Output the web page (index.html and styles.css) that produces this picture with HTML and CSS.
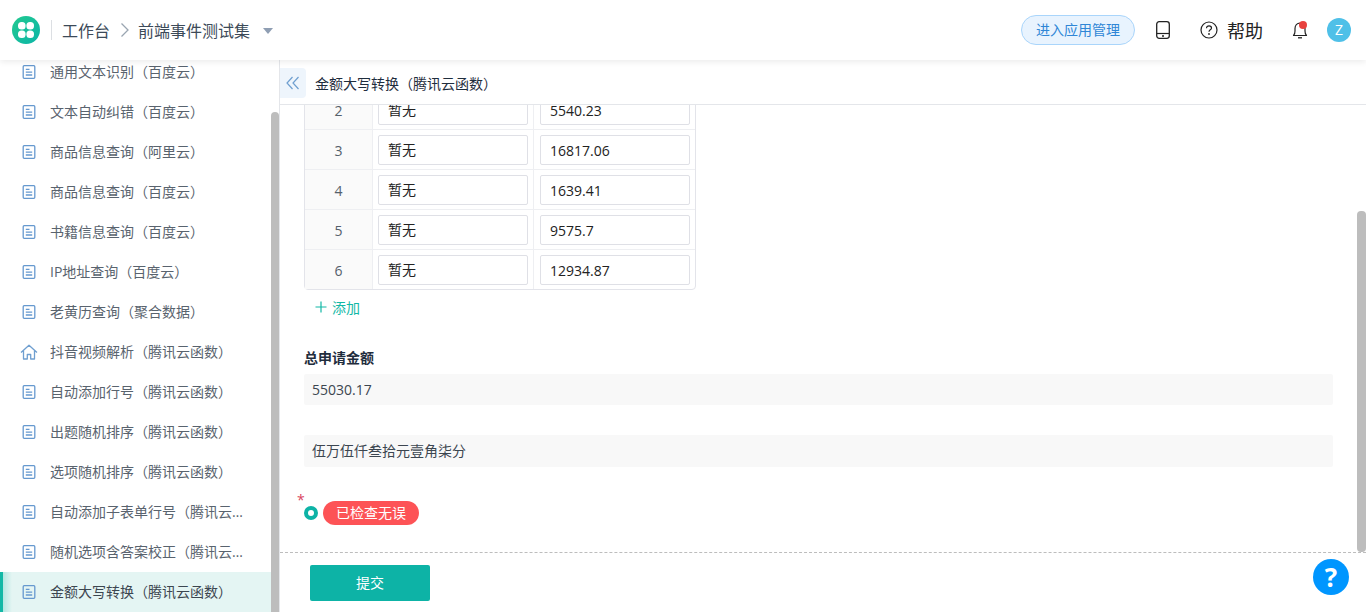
FILE: index.html
```html
<!Doctype html>
<html>
	<head>
		<meta charset="utf-8">
		<title>金额大写转换（腾讯云函数）</title>
		<link rel="stylesheet" href="styles.css">
	</head>
	<body>
		<div class="topbar">
			<div class="logo">
				<svg width="28" height="28" viewBox="0 0 28 28">
					<defs><linearGradient id="lg" x1="0" y1="0" x2="1" y2="1"><stop offset="0" stop-color="#22c98f"/><stop offset="1" stop-color="#0cb5a8"/></linearGradient></defs>
					<circle cx="14" cy="14" r="14" fill="url(#lg)"/>
					<rect x="6" y="6" width="7.600" height="7.600" rx="3.500" fill="#fff"/>
					<rect x="14.400" y="6" width="7.600" height="7.600" rx="3.500" fill="#fff"/>
					<rect x="6" y="14.400" width="7.600" height="7.600" rx="3.500" fill="#fff"/>
					<rect x="14.400" y="14.400" width="7.600" height="7.600" rx="3.500" fill="#fff"/>
				</svg>
			</div>
			<div class="crumb-line"></div>
			<span class="crumb">工作台</span>
			<svg class="crumb-arrow" width="10" height="16" viewBox="0 0 10 16"><path d="M1.500 1.500L8 8l-6.500 6.500" fill="none" stroke="#9aa5b1" stroke-width="1.300"/></svg>
			<span class="crumb">前端事件测试集</span>
			<div class="caret"></div>
			<div class="spacer"></div>
			<a class="manage">进入应用管理</a>
			<svg class="tablet" width="16" height="20" viewBox="0 0 16 20"><rect x="1.700" y="1.700" width="12.600" height="16.600" rx="2.500" fill="none" stroke="#222" stroke-width="1.300"/><path d="M2 13.500h12" stroke="#222" stroke-width="1.200"/><circle cx="8" cy="16" r="1" fill="#222"/></svg>
			<svg class="help-icon" width="18" height="18" viewBox="0 0 18 18"><circle cx="9" cy="9" r="8" fill="none" stroke="#222" stroke-width="1.200"/><path d="M6.500 7.200C6.500 5.700 7.600 4.800 9 4.800s2.500.9 2.500 2.200c0 1.800-2.500 1.900-2.500 3.700" fill="none" stroke="#222" stroke-width="1.200"/><circle cx="9" cy="13" r=".9" fill="#222"/></svg>
			<span class="help-text">帮助</span>
			<div class="bell">
				<svg width="16" height="20" viewBox="0 0 16 20"><path d="M1.500 15.500c1.200-1 1.500-2.200 1.500-4.500V8.500C3 5.500 5 3.200 8 3.200s5 2.300 5 5.300V11c0 2.300.3 3.500 1.500 4.500z" fill="none" stroke="#222" stroke-width="1.200" stroke-linejoin="round"/><path d="M6 17.800h4" stroke="#222" stroke-width="1.300"/></svg>
				<i class="bell-dot"></i>
			</div>
			<div class="avatar">Z</div>
		</div>

		<div class="page">
			<div class="sidebar">
				<div class="menu">
					<div class="item"><svg class="doc" viewBox="0 0 14 14"><use href="#doc"/></svg><span>通用文本识别（百度云）</span></div>
					<div class="item"><svg class="doc" viewBox="0 0 14 14"><use href="#doc"/></svg><span>文本自动纠错（百度云）</span></div>
					<div class="item"><svg class="doc" viewBox="0 0 14 14"><use href="#doc"/></svg><span>商品信息查询（阿里云）</span></div>
					<div class="item"><svg class="doc" viewBox="0 0 14 14"><use href="#doc"/></svg><span>商品信息查询（百度云）</span></div>
					<div class="item"><svg class="doc" viewBox="0 0 14 14"><use href="#doc"/></svg><span>书籍信息查询（百度云）</span></div>
					<div class="item"><svg class="doc" viewBox="0 0 14 14"><use href="#doc"/></svg><span>IP地址查询（百度云）</span></div>
					<div class="item"><svg class="doc" viewBox="0 0 14 14"><use href="#doc"/></svg><span>老黄历查询（聚合数据）</span></div>
					<div class="item"><svg class="home" viewBox="0 0 18 16"><path d="M1 8.500L9 1.200l8 7.300M3.500 6.800V15h3.800v-4.500h3.400V15h3.800V6.800" fill="none" stroke="#6f9fd0" stroke-width="1.300" stroke-linejoin="round"/></svg><span>抖音视频解析（腾讯云函数）</span></div>
					<div class="item"><svg class="doc" viewBox="0 0 14 14"><use href="#doc"/></svg><span>自动添加行号（腾讯云函数）</span></div>
					<div class="item"><svg class="doc" viewBox="0 0 14 14"><use href="#doc"/></svg><span>出题随机排序（腾讯云函数）</span></div>
					<div class="item"><svg class="doc" viewBox="0 0 14 14"><use href="#doc"/></svg><span>选项随机排序（腾讯云函数）</span></div>
					<div class="item"><svg class="doc" viewBox="0 0 14 14"><use href="#doc"/></svg><span>自动添加子表单行号（腾讯云函数）</span></div>
					<div class="item"><svg class="doc" viewBox="0 0 14 14"><use href="#doc"/></svg><span>随机选项含答案校正（腾讯云函数）</span></div>
					<div class="item active"><svg class="doc" viewBox="0 0 14 14"><use href="#doc"/></svg><span>金额大写转换（腾讯云函数）</span></div>
				</div>
				<div class="side-scroll"></div>
			</div>

			<div class="main">
				<div class="titlebar">
					<div class="collapse">
						<svg width="14" height="14" viewBox="0 0 14 14"><path d="M6.500 1L1 7l5.500 6M12.500 1L7 7l5.500 6" fill="none" stroke="#6f9fd0" stroke-width="1.200"/></svg>
					</div>
					<span class="title">金额大写转换（腾讯云函数）</span>
				</div>
				<div class="content">
					<div class="table">
						<div class="row"><div class="num">2</div><div class="cell"><div class="input">暂无</div></div><div class="cell"><div class="input amount">5540.23</div></div></div>
						<div class="row"><div class="num">3</div><div class="cell"><div class="input">暂无</div></div><div class="cell"><div class="input amount">16817.06</div></div></div>
						<div class="row"><div class="num">4</div><div class="cell"><div class="input">暂无</div></div><div class="cell"><div class="input amount">1639.41</div></div></div>
						<div class="row"><div class="num">5</div><div class="cell"><div class="input">暂无</div></div><div class="cell"><div class="input amount">9575.7</div></div></div>
						<div class="row"><div class="num">6</div><div class="cell"><div class="input">暂无</div></div><div class="cell"><div class="input amount">12934.87</div></div></div>
					</div>
					<div class="add">
						<svg width="12" height="12" viewBox="0 0 12 12"><path d="M6 .5v11M.5 6h11" stroke="#13b8a6" stroke-width="1.200"/></svg>
						<span>添加</span>
					</div>
					<div class="label">总申请金额</div>
					<div class="field">55030.17</div>
					<div class="field second">伍万伍仟叁拾元壹角柒分</div>
					<div class="check">
						<span class="star">*</span>
						<i class="radio"></i>
						<span class="pill">已检查无误</span>
					</div>
					<div class="main-scroll"></div>
				</div>
				<div class="footer">
					<a class="submit">提交</a>
				</div>
			</div>
		</div>

		<div class="float-help">?</div>

		<svg width="0" height="0" class="defs">
			<symbol id="doc" viewBox="0 0 14 14">
				<rect x="1.200" y=".7" width="11.600" height="12.600" rx="1" fill="none" stroke="#6699cf" stroke-width="1.300"/>
				<path d="M3.800 4.300h3.700M3.800 7.200h6.400M3.800 10h6.400" stroke="#6699cf" stroke-width="1.300"/>
			</symbol>
		</svg>
	</body>
</html>
```

FILE: styles.css
```css
* {box-sizing: border-box}
html, body { height:100%; margin:0; overflow:hidden; }
body {
	font-family:"Open Sans","Noto Sans CJK SC",sans-serif;
	font-size:14px;
	color:#1f2d3d;
	background:#fff;
}
.defs { position:absolute; }

/* top bar */
.topbar {
	position:relative;
	z-index:5;
	height:60px;
	display:flex;
	align-items:center;
	padding-left:19px;
	padding-right:15px;
	background:#fff;
	box-shadow:0 2px 6px rgba(0,0,0,.08);
}
.logo { width:28px; height:28px; margin-left:-7px; }
.logo svg { display:block; }
.crumb-line { width:1px; height:20px; background:#dcdfe3; margin-left:11px; margin-right:10px; }
.crumb { font-size:16px; color:#3c4a58; white-space:nowrap; }
.crumb-arrow { margin:0 8px 0 10px; }
.caret {
	width:0; height:0;
	margin-left:13px;
	margin-top:2px;
	border-left:5px solid transparent;
	border-right:5px solid transparent;
	border-top:6px solid #8f9eb3;
}
.spacer { flex:1; }
.manage {
	width:114px;
	height:30px;
	line-height:28px;
	text-align:center;
	font-size:14px;
	color:#2f86d6;
	background:#e8f3fe;
	border:1px solid #a9d5fb;
	border-radius:15px;
}
.tablet { margin-left:20px; }
.help-icon { margin-left:29px; }
.help-text { margin-left:9px; font-size:18px; color:#222; }
.bell { position:relative; width:16px; height:20px; margin-left:29px; margin-right:-1px; }
.bell svg { display:block; }
.bell-dot {
	position:absolute;
	top:1px; right:1px;
	width:8px; height:8px;
	border-radius:50%;
	background:#e8423f;
}
.avatar {
	width:24px; height:24px;
	margin-left:20px;
	border-radius:50%;
	background:#4fc0e8;
	color:#fff;
	font-size:14px;
	line-height:24px;
	text-align:center;
}

/* page */
.page { display:flex; height:552px; }
.sidebar {
	position:relative;
	width:280px;
	flex:none;
	overflow:hidden;
	border-right:1px solid #e4e6ea;
}
.menu { margin-top:-8px; }
.item {
	height:40px;
	display:flex;
	align-items:center;
	padding-left:22px;
	padding-right:24px;
	color:#59636e;
	font-size:14px;
}
.item span {
	margin-left:14px;
	padding-bottom:2px;
	white-space:nowrap;
	overflow:hidden;
	text-overflow:ellipsis;
}
.doc { width:14px; height:14px; flex:none; }
.home { width:18px; height:16px; flex:none; margin-left:-2px; margin-right:-2px; }
.item.active {
	background:linear-gradient(90deg,#b5e7e1,#e4f5f3 9px);
	color:#3c4650;
	border-left:3px solid #13b8a6;
	padding-left:19px;
}
.side-scroll {
	position:absolute;
	top:52px; bottom:0; right:0;
	width:8px;
	background:#bdbdbd;
	border-radius:4px 4px 0 0;
}

.main { flex:1; min-width:0; height:552px; display:flex; flex-direction:column; }
.titlebar {
	height:45px;
	flex:none;
	display:flex;
	align-items:center;
	border-bottom:1px solid #e4e6ea;
	padding-top:1px;
}
.collapse {
	width:26px; height:30px;
	margin-top:1px;
	display:flex;
	align-items:center;
	justify-content:center;
	background:#eef5fc;
	border-radius:0 4px 4px 0;
}
.title { margin-left:9px; font-size:14px; color:#1f2d3d; }

.content {
	position:relative;
	height:447px;
	flex:none;
	overflow:hidden;
	padding-left:24px;
	padding-right:33px;
}
.table {
	width:392px;
	margin-top:-16px;
	border:1px solid #e3e4ea;
	border-radius:0 0 4px 4px;
}
.row { display:flex; height:40px; border-bottom:1px solid #eeeff2; }
.row:last-child { height:39px; border-bottom:none; }
.num {
	width:68px;
	flex:none;
	display:flex;
	align-items:center;
	justify-content:center;
	padding-top:1px;
	background:#fafafa;
	border-right:1px solid #eeeff2;
	color:#55606b;
}
.cell {
	width:161px;
	flex:none;
	display:flex;
	align-items:center;
	padding-left:5px;
	border-right:1px solid #eeeff2;
}
.cell:last-child { border-right:none; padding-left:6px; }
.input {
	width:150px;
	height:30px;
	line-height:28px;
	padding-left:9px;
	border:1px solid #dfe0e6;
	border-radius:2px;
	color:#222;
}
.input.amount { line-height:30px; }
.add {
	display:flex;
	align-items:center;
	height:20px;
	margin-top:7px;
	padding-left:11px;
	color:#13b8a6;
}
.add svg { margin-right:5px; }
.label { margin-top:31px; font-size:14px; font-weight:bold; line-height:20px; color:#1f2d3d; }
.field {
	height:31px;
	margin-top:6px;
	line-height:31px;
	padding-left:8px;
	background:#f8f8f8;
	border-radius:2px;
	color:#3c4650;
}
.field.second { height:32px; margin-top:30px; line-height:31px; font-size:14px; }
.check { position:relative; display:flex; align-items:center; margin-top:34px; }
.star {
	position:absolute;
	left:-7px; top:-11px;
	color:#d9455f;
	font-size:14px;
	line-height:20px;
}
.radio {
	width:14px; height:14px;
	border-radius:50%;
	border:4px solid #0db3a6;
	background:#fff;
}
.pill {
	margin-left:5px;
	height:24px;
	line-height:23px;
	padding:0 13px;
	border-radius:12px;
	background:#fd5356;
	color:#fff;
	font-size:14px;
}
.main-scroll {
	position:absolute;
	top:106px; bottom:0; right:0;
	width:9px;
	background:#bdbdbd;
	border-radius:4px;
}

.footer {
	height:60px;
	flex:none;
	padding:12px 0 0 30px;
	border-top:1px dashed #bdbdbd;
	background:#fff;
}
.submit {
	display:block;
	width:120px;
	height:36px;
	line-height:35px;
	text-align:center;
	background:#0db3a6;
	border-radius:2px;
	color:#fff;
	font-size:14px;
}
.float-help {
	position:absolute;
	left:1313px; top:559px;
	width:36px; height:36px;
	border-radius:50%;
	background:#0096ff;
	color:#fff;
	font-size:26px;
	font-weight:bold;
	line-height:36px;
	text-align:center;
}
```
